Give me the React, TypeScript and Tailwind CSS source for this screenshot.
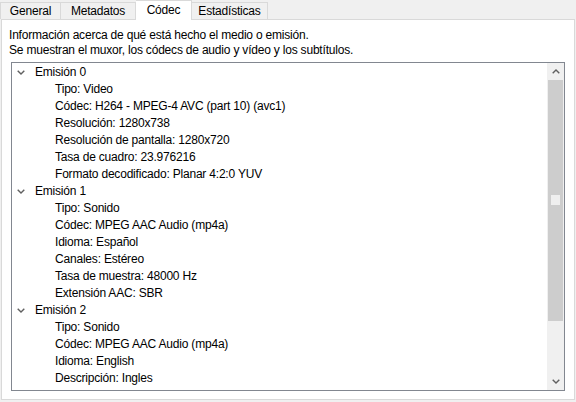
const streams = [
  {
    title: 'Emisión 0',
    items: [
      'Tipo: Video',
      'Códec: H264 - MPEG-4 AVC (part 10) (avc1)',
      'Resolución: 1280x738',
      'Resolución de pantalla: 1280x720',
      'Tasa de cuadro: 23.976216',
      'Formato decodificado: Planar 4:2:0 YUV',
    ],
  },
  {
    title: 'Emisión 1',
    items: [
      'Tipo: Sonido',
      'Códec: MPEG AAC Audio (mp4a)',
      'Idioma: Español',
      'Canales: Estéreo',
      'Tasa de muestra: 48000 Hz',
      'Extensión AAC: SBR',
    ],
  },
  {
    title: 'Emisión 2',
    items: ['Tipo: Sonido', 'Códec: MPEG AAC Audio (mp4a)', 'Idioma: English', 'Descripción: Ingles'],
  },
]

function Chevron({ up = false }: { up?: boolean }) {
  return (
    <svg width="8" height="5" viewBox="0 0 8 5" className={up ? 'rotate-180' : ''}>
      <path d="M0.7 0.7 L4 4 L7.3 0.7" fill="none" stroke="#606060" strokeWidth="1.4" />
    </svg>
  )
}

export default function App() {
  return (
    <div className="w-[576px] h-[402px] bg-[#f0f0f0] font-['Liberation_Sans',sans-serif] text-[12px] tracking-[-0.2px] text-black overflow-hidden">
      <div className="flex items-end h-[19px]">
        <div className="w-[61px] h-[17px] border border-b-0 border-[#d9d9d9] flex items-center justify-center leading-none">General</div>
        <div className="w-[75px] h-[17px] border border-l-0 border-b-0 border-[#d9d9d9] flex items-center justify-center leading-none">Metadatos</div>
        <div className="relative z-10 self-start w-[56px] h-[20px] bg-white border border-l-0 border-b-0 border-[#d9d9d9] flex items-center justify-center leading-none pb-[2px]">Códec</div>
        <div className="w-[76px] h-[17px] border border-l-0 border-b-0 border-[#d9d9d9] flex items-center justify-center leading-none">Estadísticas</div>
      </div>

      <div className="ml-px w-[574px] h-[381px] bg-white border border-[#d9d9d9]">
        <div className="pl-[7px] pt-[8px] leading-[15px]">
          <p>Información acerca de qué está hecho el medio o emisión.</p>
          <p>Se muestran el muxor, los códecs de audio y vídeo y los subtítulos.</p>
        </div>

        <div className="ml-[9px] mt-[4px] w-[554px] h-[329px] border border-[#828790] flex">
          <div className="flex-1 overflow-hidden pt-px">
            {streams.map(s => (
              <div key={s.title}>
                <div className="flex items-center h-[17px]">
                  <span className="ml-[5px] w-[8px] flex"><Chevron /></span>
                  <span className="ml-[10px] leading-[17px]">{s.title}</span>
                </div>
                {s.items.map(it => (
                  <div key={it} className="h-[17px] leading-[17px] pl-[43px] whitespace-nowrap">{it}</div>
                ))}
              </div>
            ))}
          </div>

          <div className="w-[17px] h-full bg-[#f0f0f0] flex flex-col">
            <div className="h-[17px] flex items-center justify-center"><Chevron up /></div>
            <div className="mx-px h-[241px] bg-[#cdcdcd] flex justify-center">
              <div className="mt-[115px] w-[9px] h-[10px] bg-[#efefef]" />
            </div>
            <div className="flex-1" />
            <div className="h-[17px] flex items-center justify-center"><Chevron /></div>
          </div>
        </div>
      </div>
    </div>
  )
}
